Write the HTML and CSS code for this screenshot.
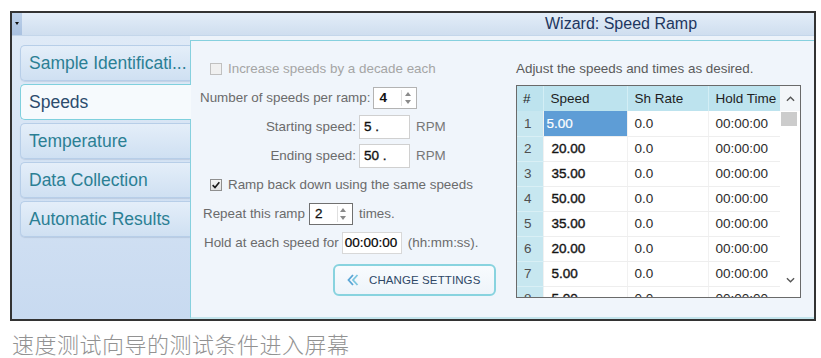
FILE: index.html
```html
<!DOCTYPE html>
<html>
<head>
<meta charset="utf-8">
<link rel="stylesheet" href="styles.css">
</head>
<body>
<div class="window">
  <div class="titlebar">
    <div class="menu-btn"><span class="tri"></span></div>
    <div class="title">Wizard: Speed Ramp</div>
  </div>
  <div class="main">
    <div class="sidebar">
      <div class="tab">Sample Identificati...</div>
      <div class="tab active">Speeds</div>
      <div class="tab">Temperature</div>
      <div class="tab">Data Collection</div>
      <div class="tab">Automatic Results</div>
    </div>
    <div class="content">
      <div class="form">
        <div class="row r-check">
          <span class="cb disabled"></span>
          <span class="lbl disabled-text">Increase speeds by a decade each</span>
        </div>
        <div class="row r-count">
          <span class="lbl">Number of speeds per ramp:</span>
          <span class="spin"><span class="val">4</span><span class="arrows"><span class="up"></span><span class="dn"></span></span></span>
        </div>
        <div class="row r-speed">
          <span class="lbl rlabel">Starting speed:</span>
          <span class="field speed-field">5 .</span>
          <span class="lbl unit">RPM</span>
        </div>
        <div class="row r-speed">
          <span class="lbl rlabel">Ending speed:</span>
          <span class="field speed-field">50 .</span>
          <span class="lbl unit">RPM</span>
        </div>
        <div class="row r-check">
          <span class="cb checked"><svg viewBox="0 0 12 12" width="10" height="10"><path d="M2 6.2 L4.8 9 L10 2.8" fill="none" stroke="#1a1a1a" stroke-width="2"/></svg></span>
          <span class="lbl">Ramp back down using the same speeds</span>
        </div>
        <div class="row r-repeat">
          <span class="lbl">Repeat this ramp</span>
          <span class="spin focus"><span class="val">2</span><span class="arrows"><span class="up"></span><span class="dn"></span></span></span>
          <span class="lbl unit">times.</span>
        </div>
        <div class="row r-hold">
          <span class="lbl">Hold at each speed for</span>
          <span class="field hold-field">00:00:00</span>
          <span class="lbl unit">(hh:mm:ss).</span>
        </div>
        <div class="btn-row">
          <div class="btn">
            <svg class="chev" viewBox="0 0 14 14" width="14" height="14"><path d="M7 2 L2.5 7 L7 12" fill="none" stroke="#5aa6d6" stroke-width="1.8"/><path d="M11.5 2 L7 7 L11.5 12" fill="none" stroke="#7cc6df" stroke-width="1.8"/></svg>
            <span>CHANGE SETTINGS</span>
          </div>
        </div>
      </div>
      <div class="grid-col">
        <div class="hint">Adjust the speeds and times as desired.</div>
        <div class="grid">
          <table class="gtable">
            <colgroup><col class="c1"><col class="c2"><col class="c3"><col class="c4"></colgroup>
            <thead>
              <tr><th>#</th><th>Speed</th><th>Sh Rate</th><th>Hold Time</th></tr>
            </thead>
            <tbody>
              <tr><td class="num">1</td><td class="spd sel">5.00</td><td>0.0</td><td>00:00:00</td></tr>
              <tr><td class="num">2</td><td class="spd">20.00</td><td>0.0</td><td>00:00:00</td></tr>
              <tr><td class="num">3</td><td class="spd">35.00</td><td>0.0</td><td>00:00:00</td></tr>
              <tr><td class="num">4</td><td class="spd">50.00</td><td>0.0</td><td>00:00:00</td></tr>
              <tr><td class="num">5</td><td class="spd">35.00</td><td>0.0</td><td>00:00:00</td></tr>
              <tr><td class="num">6</td><td class="spd">20.00</td><td>0.0</td><td>00:00:00</td></tr>
              <tr><td class="num">7</td><td class="spd">5.00</td><td>0.0</td><td>00:00:00</td></tr>
              <tr><td class="num">8</td><td class="spd">5.00</td><td>0.0</td><td>00:00:00</td></tr>
            </tbody>
          </table>
          <div class="vscroll">
            <div class="sb-head"><svg viewBox="0 0 10 6" width="9" height="6"><path d="M1 5 L5 1 L9 5" fill="none" stroke="#555" stroke-width="1.5"/></svg></div>
            <div class="sb-thumb"></div>
            <div class="sb-track"></div>
            <div class="sb-foot"><svg viewBox="0 0 10 6" width="9" height="6"><path d="M1 1 L5 5 L9 1" fill="none" stroke="#555" stroke-width="1.5"/></svg></div>
          </div>
        </div>
      </div>
    </div>
  </div>
</div>
<div class="caption">速度测试向导的测试条件进入屏幕</div>
</body>
</html>
```

FILE: styles.css
```css
html, body {
  margin: 0;
  padding: 0;
  background: #ffffff;
  font-family: "Liberation Sans", Arial, sans-serif;
}

.window {
  margin: 11px 0 0 10px;
  width: 806px;
  height: 310px;
  box-sizing: border-box;
  border: 2px solid #333333;
  display: flex;
  flex-direction: column;
  background: #edf3fa;
}

.titlebar {
  height: 22px;
  display: flex;
  align-items: stretch;
  background: linear-gradient(#e3edf8, #cfdeef);
  border-bottom: 1px solid #c4d6ea;
}

.menu-btn {
  width: 10px;
  background: linear-gradient(#bcd0e9, #a9c1e0);
  display: flex;
  justify-content: center;
  padding-top: 9px;
  box-sizing: border-box;
}

.tri {
  width: 0;
  height: 0;
  border-left: 2.5px solid transparent;
  border-right: 2.5px solid transparent;
  border-top: 3px solid #111;
}

.title {
  margin-left: 523px;
  font-size: 16px;
  line-height: 22px;
  color: #1e3760;
}

.main {
  flex: 1;
  display: flex;
  min-height: 0;
}

.sidebar {
  width: 178px;
  box-sizing: border-box;
  padding: 9px 0 0 8px;
  background: linear-gradient(#dfeaf7, #c8daf0);
  display: flex;
  flex-direction: column;
  gap: 3px;
}

.tab {
  height: 36px;
  box-sizing: border-box;
  border: 1px solid #b7cee8;
  border-right: none;
  border-radius: 5px 0 0 5px;
  background: linear-gradient(#e4eef9, #cfe0f2);
  box-shadow: 0 1px 1px rgba(60, 90, 130, 0.15);
  padding-left: 8px;
  font-size: 17.5px;
  line-height: 34px;
  color: #2b7f94;
  white-space: nowrap;
  overflow: hidden;
}

.tab.active {
  position: relative;
  z-index: 2;
  width: 171px;
  background: #f6fafd;
  border: 1.5px solid #7fd0dd;
  border-right: none;
  color: #2c4c6d;
  box-shadow: none;
}

.content {
  flex: 1;
  margin-top: 4px;
  border-top: 1px solid #86d0de;
  border-left: 1px solid #86d0de;
  border-bottom: 2px solid #c3e4ec;
  background: #f0f5fb;
  display: flex;
}

.form {
  width: 325px;
  padding-top: 13px;
  display: flex;
  flex-direction: column;
}

.row {
  height: 29px;
  display: flex;
  align-items: center;
  font-size: 13.4px;
  color: #6b6b6b;
}

.lbl {
  white-space: nowrap;
}

.disabled-text {
  color: #a5a5a5;
}

.r-check {
  padding-left: 19px;
}

.r-count {
  padding-left: 9px;
}

.r-speed {
  padding-left: 9px;
}

.r-repeat {
  padding-left: 12px;
}

.r-hold {
  padding-left: 13px;
}

.cb {
  width: 12px;
  height: 12px;
  box-sizing: border-box;
  border: 1px solid #8f8f8f;
  background: linear-gradient(#f4f4f4, #e2e2e2);
  margin-right: 6px;
  display: flex;
  align-items: center;
  justify-content: center;
}

.cb.disabled {
  border-color: #c0c0c0;
  background: #f0f0f0;
}

.spin {
  margin-left: 3px;
  width: 44px;
  height: 22px;
  box-sizing: border-box;
  border: 1px solid #b3b3b3;
  background: #ffffff;
  display: flex;
  align-items: center;
  justify-content: space-between;
  color: #111;
  font-weight: bold;
  font-size: 13.5px;
}

.r-repeat .spin {
  margin-left: 4px;
  font-weight: normal;
  -webkit-text-stroke: 0.3px #111;
}

.spin.focus {
  border-color: #707070;
}

.spin .val {
  padding-left: 5px;
}

.arrows {
  width: 11px;
  height: 16px;
  margin-right: 3px;
  border-left: 1px solid #e0e0e0;
  display: flex;
  flex-direction: column;
  align-items: center;
  justify-content: space-around;
}

.up {
  width: 0;
  height: 0;
  border-left: 3px solid transparent;
  border-right: 3px solid transparent;
  border-bottom: 4px solid #8a8a8a;
}

.dn {
  width: 0;
  height: 0;
  border-left: 3px solid transparent;
  border-right: 3px solid transparent;
  border-top: 4px solid #8a8a8a;
}

.rlabel {
  width: 156px;
  text-align: right;
}

.field {
  margin-left: 3px;
  box-sizing: border-box;
  border: 1px solid #d0d0d0;
  background: #ffffff;
  color: #111;
  font-size: 13.5px;
  -webkit-text-stroke: 0.35px #111;
  display: flex;
  align-items: center;
  padding-left: 4px;
}

.speed-field {
  width: 51px;
  height: 24px;
}

.hold-field {
  width: 60px;
  height: 22px;
  padding-left: 2px;
  color: #000;
  -webkit-text-stroke: 0.2px #000;
  border-color: #d8d8d8;
}

.unit {
  margin-left: 6px;
}

.r-speed .unit {
  color: #777;
}

.btn-row {
  margin-top: 7px;
  padding-left: 142px;
}

.btn {
  width: 163px;
  height: 32px;
  box-sizing: border-box;
  border: 2px solid #88d3df;
  border-radius: 6px;
  background: linear-gradient(#f8fbfe, #eef4fa);
  display: flex;
  align-items: center;
  padding-left: 11px;
  gap: 9px;
  font-size: 11.5px;
  color: #2e4766;
  letter-spacing: 0.1px;
}

.grid-col {
  padding-top: 13px;
  display: flex;
  flex-direction: column;
}

.hint {
  height: 29px;
  display: flex;
  align-items: center;
  font-size: 13.4px;
  color: #5a5a5a;
  white-space: nowrap;
}

.grid {
  margin-top: 2px;
  width: 285px;
  height: 213px;
  box-sizing: border-box;
  border: 1px solid #6a6a6a;
  background: #ffffff;
  display: flex;
  overflow: hidden;
}

.gtable {
  width: 263px;
  table-layout: fixed;
  border-collapse: collapse;
  font-size: 13.5px;
  flex: none;
  align-self: flex-start;
}

.c1 { width: 26px; }
.c2 { width: 84px; }
.c3 { width: 81px; }
.c4 { width: 72px; }

.gtable tr {
  height: 25px;
}

.gtable th {
  background: #bde3ee;
  font-weight: normal;
  text-align: left;
  color: #1e1e1e;
  padding: 0 0 0 7px;
  border-right: 1px solid #d3eef5;
  white-space: nowrap;
  overflow: hidden;
}

.gtable th:first-child {
  padding-left: 6px;
}

.gtable th:last-child {
  border-right: none;
}

.gtable td {
  padding: 0 0 0 7px;
  border-bottom: 1px solid #eeeeee;
  border-right: 1px solid #f1f1f1;
  color: #2a2a2a;
  white-space: nowrap;
  overflow: hidden;
}

.gtable td:last-child {
  border-right: none;
}

.gtable td.num {
  background: #c7e7f0;
  color: #4f4f4f;
  border-bottom-color: #d9eff5;
  padding-left: 7px;
}

.gtable td.spd {
  color: #151515;
  -webkit-text-stroke: 0.4px #151515;
  padding-left: 8px;
}

.gtable td.sel {
  background: #5e9dd6;
  color: #ffffff;
  -webkit-text-stroke: 0.2px #ffffff;
  padding-left: 3px;
}

.vscroll {
  width: 20px;
  display: flex;
  flex-direction: column;
  background: #ffffff;
}

.sb-head {
  height: 25px;
  background: #f3f6f9;
  display: flex;
  align-items: center;
  justify-content: center;
}

.sb-thumb {
  height: 14px;
  margin: 1px 3px 0 1px;
  background: #cccccc;
}

.sb-track {
  flex: 1;
}

.sb-foot {
  height: 20px;
  display: flex;
  align-items: flex-start;
  justify-content: center;
}

.caption {
  margin: 9px 0 0 12px;
  font-family: "Noto Sans CJK SC", sans-serif;
  font-size: 22px;
  line-height: 26px;
  letter-spacing: 0.5px;
  color: #929292;
  font-weight: 300;
}
```
